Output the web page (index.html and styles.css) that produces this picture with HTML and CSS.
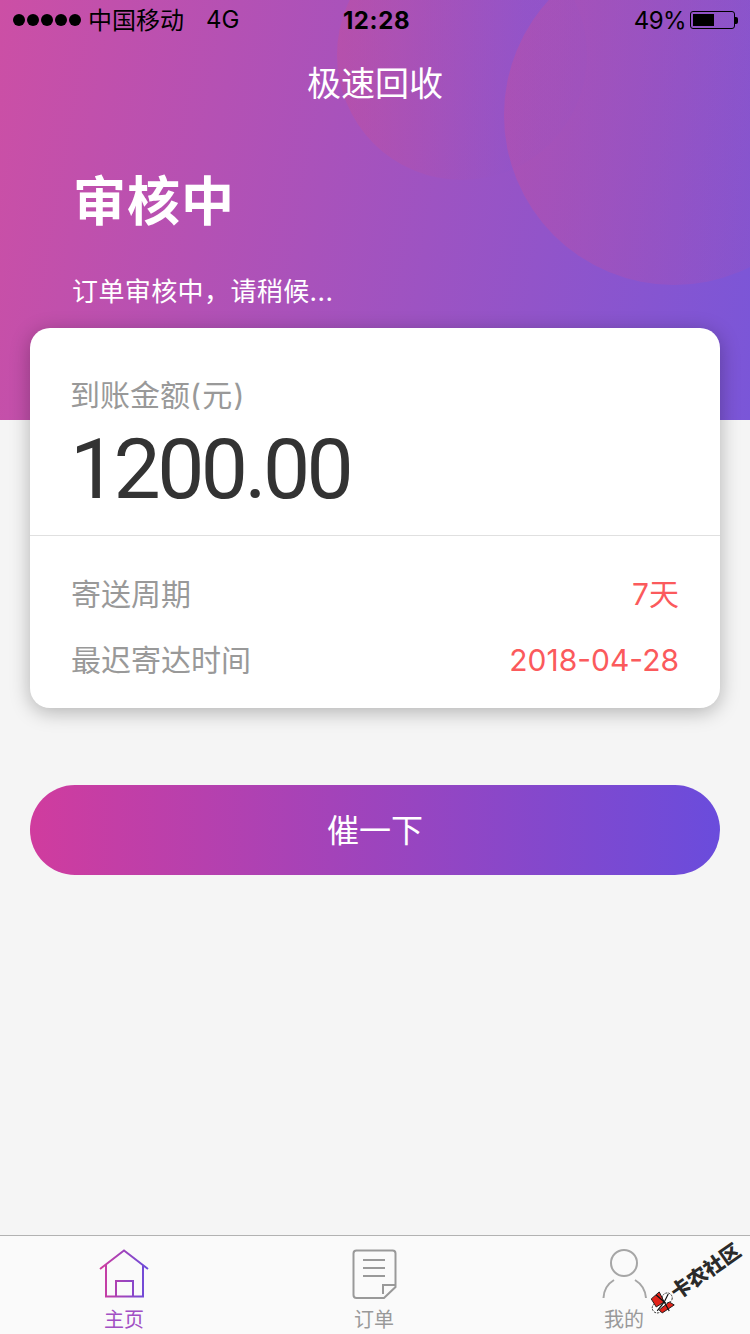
FILE: index.html
```html
<!DOCTYPE html>
<html lang="zh-CN">
  <head>
    <meta charset="UTF-8" />
    <meta name="viewport" content="width=device-width, initial-scale=1.0" />
    <title>极速回收</title>
    <link rel="stylesheet" href="styles.css">
  </head>
  <body>
    <div class="page">
      <div class="hero">
        <div class="circle circleLeft"></div>
        <div class="circle circleRight"></div>

        <div class="statusBar">
          <div class="statusLeft">
            <div class="signal">
              <span class="dot"></span><span class="dot"></span><span class="dot"></span><span class="dot"></span><span class="dot"></span>
            </div>
            <span class="carrier">中国移动</span>
            <span class="network">4G</span>
          </div>
          <div class="clock">12:28</div>
          <div class="statusRight">
            <span class="percent">49%</span>
            <div class="battery"><div class="batteryLevel"></div></div>
            <div class="batteryTip"></div>
          </div>
        </div>

        <h1 class="navTitle">极速回收</h1>
        <h2 class="heroTitle">审核中</h2>
        <p class="heroText">订单审核中，请稍候...</p>
      </div>

      <div class="card">
        <div class="cardTop">
          <div class="amountLabel">到账金额<span class="amountUnit">(元)</span></div>
          <div class="amount">1200.00</div>
        </div>
        <div class="cardBottom">
          <div class="infoRow">
            <span>寄送周期</span>
            <span class="infoValue">7天</span>
          </div>
          <div class="infoRow">
            <span>最迟寄达时间</span>
            <span class="infoValue">2018-04-28</span>
          </div>
        </div>
      </div>

      <button class="urgeButton">催一下</button>

      <div class="tabBar">
        <div class="tab tabActive">
          <svg class="tabIcon" width="52" height="50" viewBox="0 0 52 50" fill="none">
            <defs>
              <linearGradient id="homeGrad" gradientUnits="userSpaceOnUse" x1="1" y1="0" x2="49" y2="0">
                <stop offset="0" stop-color="#d03c9e" />
                <stop offset="1" stop-color="#6a4cdc" />
              </linearGradient>
            </defs>
            <path d="M1 20 L25 1.5 L49 20 M7 15.5 V47.5 H44 V15.5 M17 47.5 V32 H34 V47.5" stroke="url(#homeGrad)" stroke-width="2" />
          </svg>
          <span class="tabLabel">主页</span>
        </div>
        <div class="tab">
          <svg class="tabIcon" width="46" height="50" viewBox="0 0 46 50" fill="none" stroke="#999" stroke-width="2">
            <path d="M4.5 1.5 H40.5 Q43.5 1.5 43.5 4.5 V38 L32 49 H4.5 Q1.5 49 1.5 46 V4.5 Q1.5 1.5 4.5 1.5 Z" />
            <path d="M11 11 H33 M11 19 H33 M11 27 H33 M31 45 V36 H43" />
          </svg>
          <span class="tabLabel">订单</span>
        </div>
        <div class="tab">
          <svg class="tabIcon" width="46" height="50" viewBox="0 0 46 50" fill="none" stroke="#a6a6a6" stroke-width="2">
            <circle cx="22" cy="14" r="13" />
            <path d="M1.5 49 Q2 37 12 31 M44 49 Q43 37 33 31" />
          </svg>
          <span class="tabLabel">我的</span>
        </div>
      </div>

      <div class="watermark">
        <svg class="watermarkLogo" width="26" height="26" viewBox="0 0 26 26">
          <g transform="rotate(35 13 13)">
            <circle cx="18" cy="9" r="5" fill="#fff" stroke="#333" stroke-width="1" stroke-dasharray="2 1" />
            <circle cx="8" cy="19" r="5" fill="#fff" stroke="#333" stroke-width="1" stroke-dasharray="2 1" />
            <path d="M2 10 L10 3 L15 13 L7 18 Z M10 21 L20 13 L25 16 L13 24 Z" fill="#e2231a" stroke="#222" stroke-width="1" />
            <path d="M7 6 L15 13 L20 22 M19 5 L15 13 L8 22" fill="none" stroke="#111" stroke-width="1.2" />
          </g>
        </svg>
        <span>卡农社区</span>
      </div>
    </div>
  </body>
</html>
```

FILE: styles.css
```css
* {
  box-sizing: border-box;
}
body {
  margin: 0;
  background: #f5f5f5;
  font-family: Inter, "Noto Sans CJK SC", sans-serif;
}
.page {
  position: relative;
  display: flex;
  flex-direction: column;
  width: 750px;
  height: 1334px;
  overflow: hidden;
}

.hero {
  position: relative;
  flex: none;
  height: 420px;
  overflow: hidden;
  color: #fff;
  background: linear-gradient(100deg, #cc4fa5 0%, #7a56d8 100%);
}
.circle {
  position: absolute;
  border-radius: 50%;
}
.circleLeft {
  left: 337px;
  top: -70px;
  width: 250px;
  height: 250px;
  background: linear-gradient(90deg, rgba(200, 78, 150, 0.4) 0%, rgba(125, 85, 215, 0.15) 75%);
}
.circleRight {
  left: 504px;
  top: -55px;
  width: 340px;
  height: 340px;
  background: linear-gradient(95deg, rgba(195, 78, 160, 0.45) 0%, rgba(130, 80, 200, 0.1) 100%);
}

.statusBar {
  position: relative;
  display: grid;
  grid-template-columns: 1fr auto 1fr;
  align-items: center;
  height: 40px;
  padding: 0 12px 0 13px;
  color: #000;
  font-size: 24px;
}
.statusLeft {
  display: flex;
  align-items: center;
}
.signal {
  display: flex;
  gap: 2px;
  margin-right: 7px;
}
.dot {
  width: 12px;
  height: 12px;
  border-radius: 50%;
  background: #000;
}
.carrier {
  margin-top: -3px;
}
.network {
  margin-top: -2px;
  margin-left: 22px;
}
.clock {
  margin-left: 2px;
  font-weight: 700;
  letter-spacing: 0.6px;
}
.statusRight {
  display: flex;
  align-items: center;
  justify-content: flex-end;
}
.percent {
  letter-spacing: -0.6px;
}
.battery {
  width: 45px;
  height: 18px;
  margin-left: 4px;
  padding: 2px;
  border: 1px solid #000;
  border-radius: 3px;
}
.batteryLevel {
  width: 21px;
  height: 100%;
  background: #000;
}
.batteryTip {
  width: 3px;
  height: 7px;
  background: #000;
  border-radius: 0 2px 2px 0;
}

.navTitle {
  position: relative;
  margin: 0;
  height: 88px;
  line-height: 88px;
  font-size: 34px;
  font-weight: 400;
  text-align: center;
}
.heroTitle {
  position: relative;
  margin: 0;
  padding-left: 73px;
  height: 146px;
  line-height: 148px;
  font-size: 53px;
  font-weight: 700;
  letter-spacing: 1px;
}
.heroText {
  position: relative;
  margin: 0;
  padding-left: 72px;
  font-size: 26px;
  line-height: 36px;
  letter-spacing: 0.4px;
}

.card {
  position: relative;
  flex: none;
  margin: -92px 30px 0;
  height: 380px;
  background: #fff;
  border-radius: 20px;
  box-shadow: 0 4px 20px rgba(0, 0, 0, 0.28);
}
.cardTop {
  height: 208px;
  padding: 47px 40px 0;
  border-bottom: 1px solid #e0e0e0;
}
.amountLabel {
  color: #999;
  font-size: 30px;
  line-height: 40px;
}
.amountUnit {
  letter-spacing: 1.3px;
}
.amount {
  margin-top: 13px;
  color: #333;
  font-family: Roboto, sans-serif;
  font-size: 84px;
  line-height: 84px;
  letter-spacing: -3.6px;
}
.cardBottom {
  display: flex;
  flex-direction: column;
  gap: 26px;
  padding: 38px 41px 0;
}
.infoRow {
  display: flex;
  justify-content: space-between;
  color: #999;
  font-size: 30px;
  line-height: 40px;
}
.infoValue {
  color: #fb5a5c;
}

.urgeButton {
  flex: none;
  margin: 77px 30px 0;
  height: 90px;
  padding: 0 0 5px;
  border: none;
  border-radius: 45px;
  color: #fff;
  font-family: inherit;
  font-size: 32px;
  background: linear-gradient(90deg, #d03c9e 0%, #6a4cdc 100%);
}

.tabBar {
  display: grid;
  grid-template-columns: repeat(3, 1fr);
  flex: none;
  margin-top: auto;
  height: 99px;
  padding-top: 13px;
  background: #fafafa;
  border-top: 1px solid #b2b2b2;
}
.tab {
  display: flex;
  flex-direction: column;
  align-items: center;
  color: #999;
  font-size: 20px;
  line-height: 26px;
}
.tabIcon {
  margin-bottom: 8px;
}
.tabLabel {
  margin-right: 2px;
}
.tabActive {
  color: #a24fc4;
}

.watermark {
  position: absolute;
  left: 642px;
  top: 1266px;
  display: flex;
  align-items: center;
  height: 26px;
  transform: rotate(-35deg);
  color: #2a2a2a;
  font-size: 20px;
  font-weight: 900;
  line-height: 26px;
  white-space: nowrap;
}
.watermarkLogo {
  flex: none;
}
```
